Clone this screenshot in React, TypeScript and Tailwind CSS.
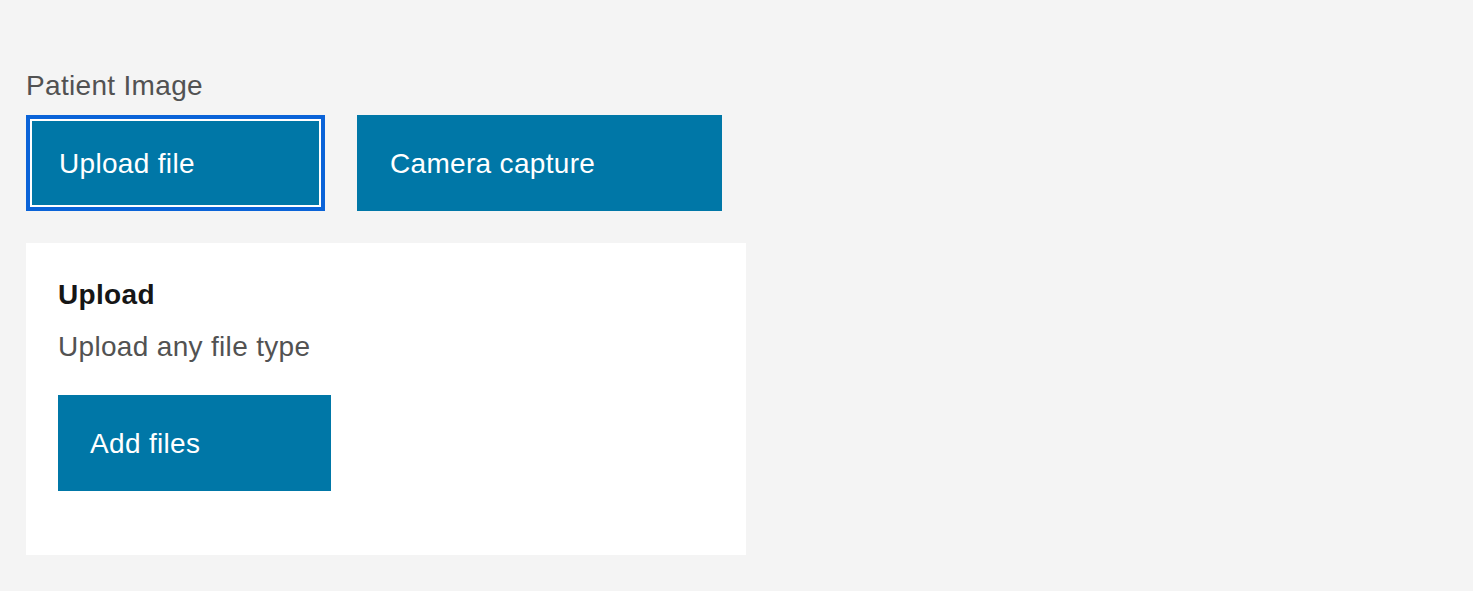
import React from "react";

export default function App() {
  return (
    <div
      className="min-h-screen w-full bg-[#f4f4f4] px-[26px] pt-[68px] tracking-[0.32px]"
      style={{ fontFamily: '"Liberation Sans", Arial, sans-serif' }}
    >
      <div className="text-[28px] leading-[36px] text-[#525252]">Patient Image</div>
      <div className="mt-[11px] flex gap-[32px]">
        <button className="flex h-[96px] w-[299px] items-center border-[4px] border-[#0a63d8] bg-[#0077a7] pl-[29px] pt-[2px] text-left text-[28px] text-white shadow-[inset_0_0_0_2px_#ffffff]">
          Upload file
        </button>
        <button className="flex h-[96px] w-[365px] items-center bg-[#0077a7] pl-[33px] pt-[2px] text-left text-[28px] text-white">
          Camera capture
        </button>
      </div>
      <div className="mt-[32px] flex h-[312px] w-[720px] flex-col bg-white px-[32px] pt-[34px]">
        <div className="text-[28px] font-bold leading-[36px] text-[#161616]">Upload</div>
        <div className="mt-[16px] text-[28px] leading-[36px] text-[#525252]">Upload any file type</div>
        <button className="mt-[30px] flex h-[96px] w-[273px] items-center bg-[#0077a7] pl-[32px] pt-[2px] text-left text-[28px] text-white">
          Add files
        </button>
      </div>
    </div>
  );
}
